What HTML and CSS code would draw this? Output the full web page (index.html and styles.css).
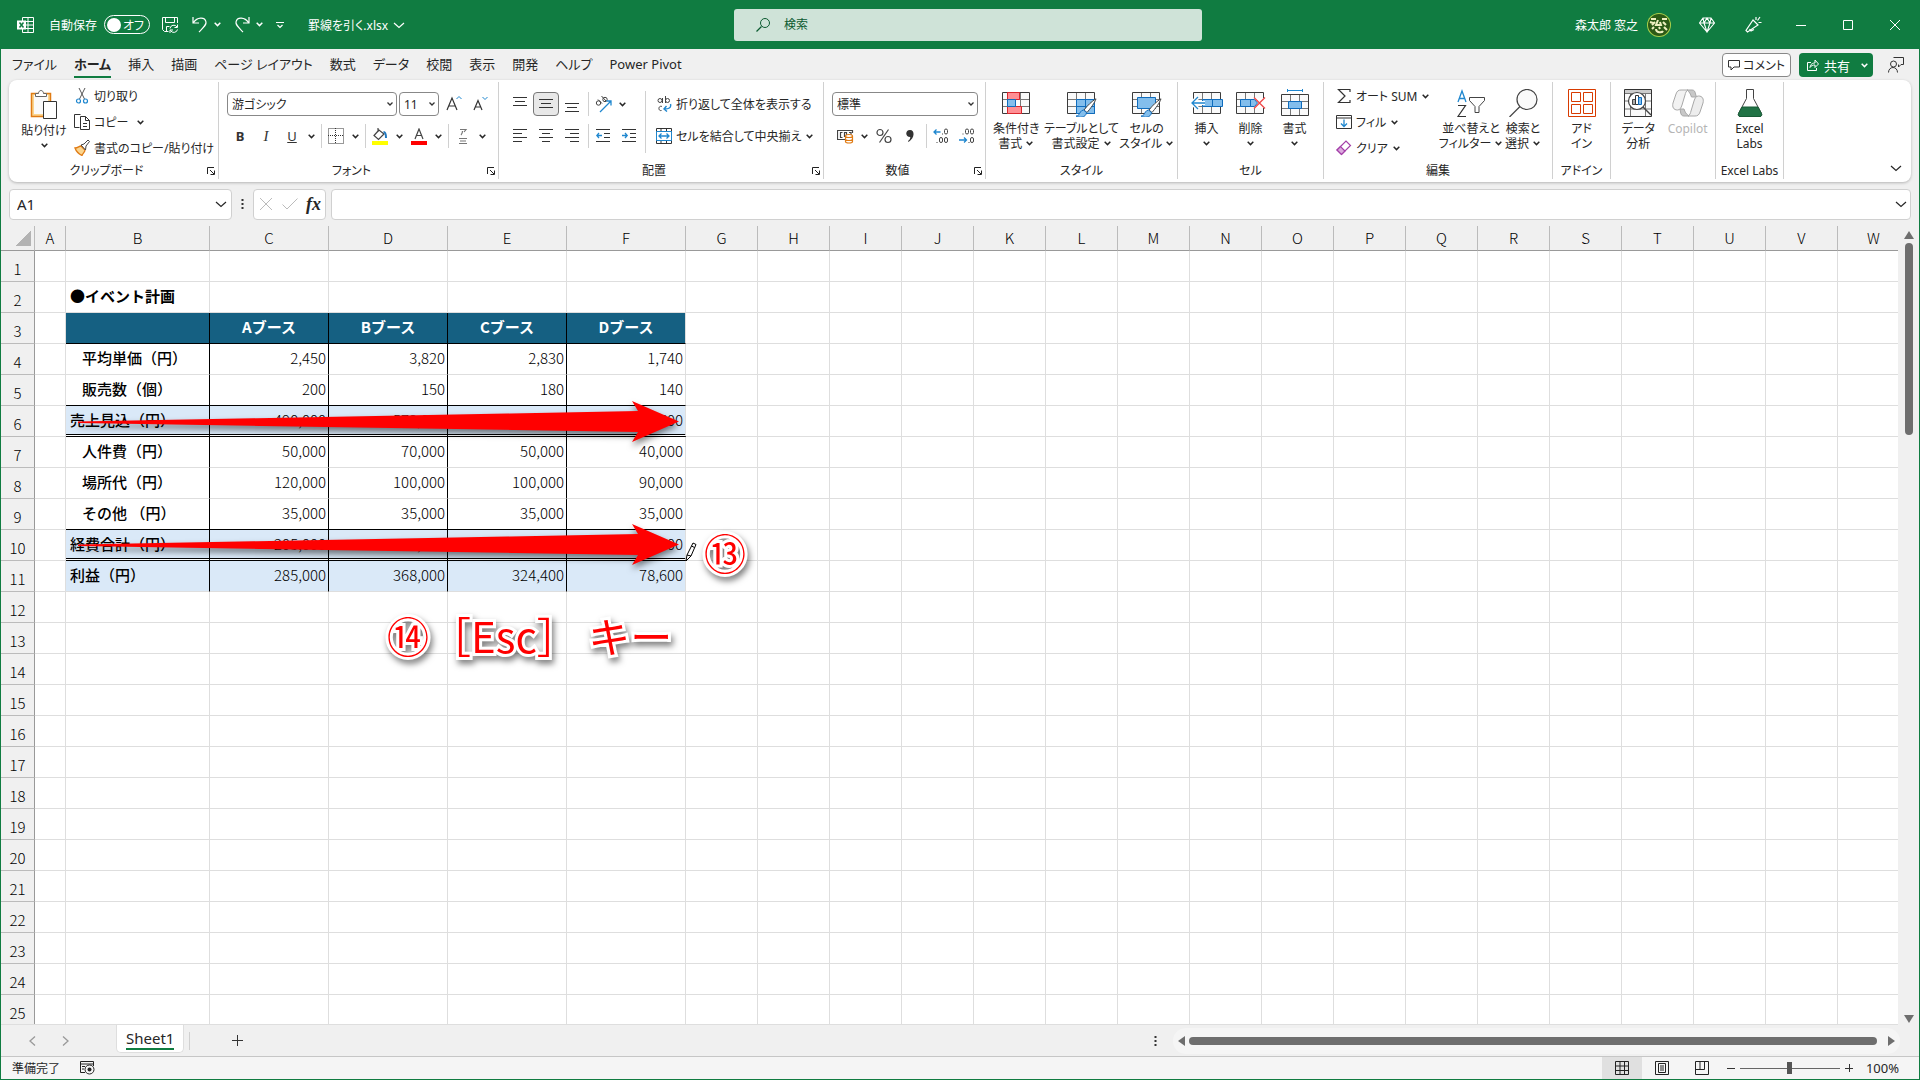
FILE: index.html
```html
<!DOCTYPE html>
<html lang="ja">
  <head>
    <meta charset="UTF-8" />
    <meta name="viewport" content="width=device-width, initial-scale=1.0" />
    <title>罫線を引く.xlsx</title>
    <link rel="stylesheet" href="styles.css">
  </head>
  <body>
    <!-- shared icon shapes -->
    <svg class="sprite" aria-hidden="true">
      <symbol id="chev" viewBox="0 0 8 8"><path d="M1.5 2.5 4 5l2.5-2.5" fill="none" stroke="currentColor" stroke-width="1.3" /></symbol>
      <symbol id="chev-lg" viewBox="0 0 12 12"><path d="M1 4 6 8.500 11 4" fill="none" stroke="currentColor" stroke-width="1.200" /></symbol>
      <symbol id="launch" viewBox="0 0 8 8"><path d="M.5 7V.5H7M3 3l4 4M7.500 3.500v4h-4" fill="none" stroke="#222" /></symbol>
      <symbol id="grid-icon" viewBox="0 0 28 22">
        <path d="M.5.5h27v21H.5z" fill="#fafafa" />
        <path d="M9.500 1v20M18.500 1v20M1 7.500h26M1 14.500h26" stroke="#777" fill="none" />
        <path d="M.5.5h27v21H.5z" stroke="#3b3b3b" fill="none" />
      </symbol>
      <symbol id="brush" viewBox="0 0 22 20">
        <path d="M21 .8C17 3 12 8 9 12l3 2.500C15 11 20 4.500 21 .8z" fill="#fff" stroke="#444" />
        <path d="M8.500 12c-3 .5-3.500 3-4.500 4.500-.8 1-2 1.500-3 1.500 3 2 10 2 10.500-3.500z" fill="#83beec" stroke="#0f6cbd" />
      </symbol>
    </svg>

    <div class="window">
      <header class="titlebar">
        <div class="title-left">
          <svg class="ico app-icon" width="17" height="16" viewBox="0 0 17 16"><path d="M5.500.5h11v15h-11zM11 .5v15M5.500 4.500h11M5.500 8h11M5.500 11.500h11" fill="none" stroke="#fff" /><path d="M0 3.500h9v9H0z" fill="#fff" /><path d="M2.500 5.500 6.500 10.500M6.500 5.500 2.500 10.500" stroke="#107c41" stroke-width="1.500" /></svg>
          <label class="autosave" for="autosave">自動保存</label>
          <span class="switch"><input type="checkbox" id="autosave"><span class="knob"></span><span>オフ</span></span>
          <button class="tb" aria-label="保存"><svg class="ico" width="16" height="16" viewBox="0 0 16 16"><path d="M15.500 6V.5H.5v12l2 2h4M3.500.5v5h9v-5M4.500 14V9.500h3M8 11.500A3.800 3.800 0 0 1 15 10M15.500 7.500v3h-3M15.500 12.500a3.800 3.800 0 0 1-7 1M8 16v-3h3" fill="none" stroke="#fff" /></svg></button>
          <button class="tb tb-undo" aria-label="元に戻す"><svg class="ico" width="16" height="17" viewBox="0 0 16 17"><path d="M1 1v6h6M1.500 6.500C5 1 13 .5 14 6c.5 3-2 5-7 10" fill="none" stroke="#fff" stroke-width="1.200" /></svg><svg class="ico" width="9" height="9"><use href="#chev" /></svg></button>
          <button class="tb" aria-label="やり直し"><svg class="ico" width="16" height="17" viewBox="0 0 16 17"><path d="M15 1v6H9M14.500 6.500C11 1 3 .5 2 6c-.5 3 2 5 7 10" fill="none" stroke="#fff" stroke-width="1.200" /></svg><svg class="ico" width="9" height="9"><use href="#chev" /></svg></button>
          <button class="tb" aria-label="カスタマイズ"><svg class="ico" width="8" height="8" viewBox="0 0 8 8"><path d="M0 1.500h8M1.500 4 4 6.500 6.500 4" fill="none" stroke="#fff" stroke-width="1.200" /></svg></button>
          <button class="tb file-name">罫線を引く.xlsx <svg class="ico" width="12" height="12"><use href="#chev-lg" /></svg></button>
        </div>
        <div class="search">
          <svg class="ico" width="16" height="16" viewBox="0 0 16 16"><circle cx="10" cy="6" r="4.500" fill="none" stroke="#0b5a30" /><path d="M6.500 9.500 1.500 14.500" stroke="#0b5a30" stroke-width="1.200" /></svg>
          <input type="search" aria-label="検索" placeholder="検索">
        </div>
        <div class="title-right">
          <span class="user">森太郎 窓之</span>
          <svg class="ico avatar" width="24" height="24" viewBox="0 0 24 24"><circle cx="12" cy="12" r="12" fill="#a9cf4a" /><circle cx="12" cy="12" r="11" fill="#2c5a16" /><path d="M4 6h5M15 6h5M8 9 5 12M16 9l3 3M11 7l-2 5h5l-1-3M5 16l2-2M17 14l3 3M9 16c0 4 6 4 7 2M12 14l1 2M3 9l3 1" fill="none" stroke="#eef0c0" stroke-width="2" /></svg>
          <button class="wb" aria-label="プレミアム"><svg class="ico" width="16" height="16" viewBox="0 0 16 16"><path d="M4 1h8l3.500 5L8 15 .5 6zM.5 6h15M4 1l1 5 3 9 3-9 1-5M5 6l3-5 3 5" fill="none" stroke="#fff" stroke-width="1.100" /></svg></button>
          <button class="wb" aria-label="新機能"><svg class="ico" width="17" height="17" viewBox="0 0 17 17"><path d="M8 4 1 14.500l1.500 1.500L13 9zM4.500 13l1.500 2 3-1.500M11 4V1M12.500 4.500 15 1M13.500 6.500h3" fill="none" stroke="#fff" stroke-width="1.200" /></svg></button>
          <button class="wb" aria-label="最小化"><svg class="ico" width="10" height="10"><path d="M0 5.500h10" stroke="#fff" /></svg></button>
          <button class="wb" aria-label="最大化"><svg class="ico" width="10" height="10"><path d="M.5.5h9v9h-9z" fill="none" stroke="#fff" /></svg></button>
          <button class="wb" aria-label="閉じる"><svg class="ico" width="10" height="10"><path d="M0 0l10 10M10 0 0 10" stroke="#fff" /></svg></button>
        </div>
      </header>

      <div class="tabs">
        <nav>
          <a href="#file">ファイル</a>
          <a href="#home" class="active">ホーム</a>
          <a href="#insert">挿入</a>
          <a href="#draw">描画</a>
          <a href="#layout">ページ レイアウト</a>
          <a href="#formulas">数式</a>
          <a href="#data">データ</a>
          <a href="#review">校閲</a>
          <a href="#view">表示</a>
          <a href="#dev">開発</a>
          <a href="#help">ヘルプ</a>
          <a href="#pivot">Power Pivot</a>
        </nav>
        <div class="tab-actions">
          <button class="comment"><svg class="ico" width="12" height="12" viewBox="0 0 12 12"><path d="M.5 1.500h11v6.500H6L3 11V8H.5z" fill="none" stroke="#333" /></svg>コメント</button>
          <button class="share"><svg class="ico" width="12" height="12" viewBox="0 0 12 12"><path d="M4 3.500H.5v8h9V9M3 8.500C3.500 5 5.500 4 8 4V1l3.500 4L8 8.500V6C6 6 4 6.500 3 8.500z" fill="none" stroke="#fff" /></svg>共有<svg class="ico" width="9" height="9"><use href="#chev" /></svg></button>
          <button class="plain" aria-label="共同作業"><svg class="ico" width="16" height="16" viewBox="0 0 16 16"><path d="M5.500.5h10v7h-2.500L10.500 10V7.500M.5 15.500c0-3 2-5 4.500-5s4.500 2 4.500 5" fill="none" stroke="#333" /><circle cx="5.500" cy="7" r="3" fill="#f0f0f0" stroke="#333" /></svg></button>
        </div>
      </div>

      <section class="ribbon">
        <div class="group g-clipboard">
          <div class="tools">
            <button class="big"><svg class="ico" width="28" height="30" viewBox="0 0 28 30"><path d="M1.500 4.500h19v23h-19z" fill="#fbd58f" stroke="#e07b14" stroke-width="1.500" /><path d="M4 6h14v19H4z" fill="#fafafa" /><path d="M5.500 7.500v-3h3c0-4 5-4 5 0h3v3z" fill="#fff" stroke="#666" /><path d="M13.500 12.500h13v17h-13z" fill="#fff" stroke="#333" /></svg><span>貼り付け</span><svg class="ico" width="9" height="9"><use href="#chev" /></svg></button>
            <div class="stack">
              <button class="row"><svg class="ico" width="16" height="16" viewBox="0 0 16 16"><path d="M5 0l5.500 11M11 0 5.500 11" stroke="#555" fill="none" /><circle cx="4.500" cy="13" r="2" fill="none" stroke="#1f87cf" stroke-width="1.200" /><circle cx="11.500" cy="13" r="2" fill="none" stroke="#1f87cf" stroke-width="1.200" /></svg>切り取り</button>
              <button class="row"><svg class="ico" width="16" height="16" viewBox="0 0 16 16"><path d="M5.500 13.500H.5V.5h6M6.500 2.500h5l4 4v9h-9zM11.500 2.500v4h4M9 9.500h4M9 12.500h4" fill="none" stroke="#333" /></svg>コピー<svg class="ico after" width="9" height="9"><use href="#chev" /></svg></button>
              <button class="row"><svg class="ico" width="16" height="16" viewBox="0 0 16 16"><path d="M1 8c3 0 4-2 6-2l4 4c0 2-2 3-3 5.500C5 14 2 11 1 8z" fill="#fbd58f" stroke="#e07b14" stroke-width="1.300" /><path d="M7 5l3-1 4-4 1.500 1.500L12 6l-.500 4z" fill="#fff" stroke="#444" /></svg>書式のコピー/貼り付け</button>
            </div>
          </div>
          <div class="caption has-launcher">クリップボード<button class="launcher" aria-label="詳細"><svg class="ico" width="8" height="8"><use href="#launch" /></svg></button></div>
        </div>

        <div class="group g-font">
          <div class="tools lines">
            <div class="line">
              <select class="combo combo-font" aria-label="フォント"><option>游ゴシック</option></select>
              <select class="combo combo-size" aria-label="サイズ"><option>11</option></select>
              <button class="ib" aria-label="拡大"><svg class="ico" width="16" height="18" viewBox="0 0 16 18"><path d="M1 15 6 3l5 12M3 11h6" fill="none" stroke="#333" stroke-width="1.200" /><path d="M10.500 4 13 1.500 15.500 4" fill="none" stroke="#1f87cf" /></svg></button>
              <button class="ib" aria-label="縮小"><svg class="ico" width="16" height="18" viewBox="0 0 16 18"><path d="M2 15 6 5.500 10 15M3.500 12h5" fill="none" stroke="#333" stroke-width="1.200" /><path d="M10.500 2 13 4.500 15.500 2" fill="none" stroke="#1f87cf" /></svg></button>
            </div>
            <div class="line">
              <button class="ib bold">B</button>
              <button class="ib italic">I</button>
              <button class="ib underline">U</button>
              <button class="dd" aria-label="下線の種類"><svg class="ico" width="9" height="9"><use href="#chev" /></svg></button>
              <span class="sep"></span>
              <button class="ib" aria-label="罫線"><svg class="ico" width="16" height="16" viewBox="0 0 16 16"><path d="M.5.5h15v15H.5zM7.500 0v16M0 7.500h16" fill="none" stroke="#333" stroke-dasharray="1 1" /></svg></button>
              <button class="dd" aria-label="罫線の種類"><svg class="ico" width="9" height="9"><use href="#chev" /></svg></button>
              <span class="sep"></span>
              <button class="ib" aria-label="塗りつぶし"><svg class="ico" width="16" height="17" viewBox="0 0 16 17"><path d="M7 2 2 7.500l4.500 4L12 6zM6 0v4" fill="none" stroke="#444" stroke-width="1.200" /><path d="M11.500 4c2 0 2.500 2 2.500 6" fill="none" stroke="#1f78c0" stroke-width="2" /><path d="M0 13h16v4H0z" fill="#ff0" /></svg></button>
              <button class="dd" aria-label="塗りつぶしの色"><svg class="ico" width="9" height="9"><use href="#chev" /></svg></button>
              <button class="ib" aria-label="文字色"><svg class="ico" width="16" height="17" viewBox="0 0 16 17"><path d="M4 11 8 1l4 10M5.500 7.500h5" fill="none" stroke="#444" stroke-width="1.200" /><path d="M0 13h16v4H0z" fill="#f00" /></svg></button>
              <button class="dd" aria-label="フォントの色"><svg class="ico" width="9" height="9"><use href="#chev" /></svg></button>
              <span class="sep"></span>
              <button class="ib" aria-label="ふりがな"><svg class="ico" width="10" height="17" viewBox="0 0 10 17"><path d="M2 1.500h6L6 4M4.500 3c0 2-.5 3-1.500 4M1 10.500h8M2 13h6M1 15.500h8" fill="none" stroke="#777" stroke-width="1.200" /></svg></button>
              <button class="dd" aria-label="ふりがなの設定"><svg class="ico" width="9" height="9"><use href="#chev" /></svg></button>
            </div>
          </div>
          <div class="caption has-launcher">フォント<button class="launcher" aria-label="詳細"><svg class="ico" width="8" height="8"><use href="#launch" /></svg></button></div>
        </div>

        <div class="group g-align">
          <div class="tools">
            <div class="lines">
              <div class="line">
                <button class="ib" aria-label="上揃え"><svg class="ico" width="14" height="18"><path d="M0 2.500h14M2 6.500h10M0 10.500h14" stroke="#333" /></svg></button>
                <button class="ib on" aria-label="上下中央揃え"><svg class="ico" width="14" height="14"><path d="M0 2.500h14M2 6.500h10M0 10.500h14" stroke="#333" /></svg></button>
                <button class="ib" aria-label="下揃え"><svg class="ico" width="14" height="18"><path d="M0 8.500h14M2 12.500h10M0 16.500h14" stroke="#333" /></svg></button>
                <span class="sep"></span>
                <button class="ib" aria-label="方向"><svg class="ico" width="17" height="17" viewBox="0 0 17 17"><circle cx="3.500" cy="7" r="2.200" fill="none" stroke="#444" /><path d="M3 3.500l4 4M6.500 0l4.500 5" stroke="#444" /><circle cx="10" cy="3.500" r="2.200" fill="none" stroke="#444" /><path d="M5 16 16 5M11.500 5H16v4.500" fill="none" stroke="#1f87cf" stroke-width="1.300" /></svg></button>
                <button class="dd" aria-label="方向の種類"><svg class="ico" width="9" height="9"><use href="#chev" /></svg></button>
              </div>
              <div class="line">
                <button class="ib" aria-label="左揃え"><svg class="ico" width="14" height="14"><path d="M0 .5h14M0 4.500h9M0 8.500h14M0 12.500h9" stroke="#333" /></svg></button>
                <button class="ib" aria-label="中央揃え"><svg class="ico" width="14" height="14"><path d="M0 .5h14M3 4.500h8M0 8.500h14M3 12.500h8" stroke="#333" /></svg></button>
                <button class="ib" aria-label="右揃え"><svg class="ico" width="14" height="14"><path d="M0 .5h14M5 4.500h9M0 8.500h14M5 12.500h9" stroke="#333" /></svg></button>
                <span class="sep"></span>
                <button class="ib" aria-label="インデントを減らす"><svg class="ico" width="14" height="14"><path d="M0 .5h14M8 4.500h6M8 8.500h6M0 12.500h14" stroke="#333" /><path d="M6 6.500H.8M3 4 .8 6.500 3 9" fill="none" stroke="#1f87cf" stroke-width="1.300" /></svg></button>
                <button class="ib" aria-label="インデントを増やす"><svg class="ico" width="14" height="14"><path d="M0 .5h14M8 4.500h6M8 8.500h6M0 12.500h14" stroke="#333" /><path d="M0 6.500h5.200M3 4l2.200 2.500L3 9" fill="none" stroke="#1f87cf" stroke-width="1.300" /></svg></button>
              </div>
            </div>
            <span class="sep tall"></span>
            <div class="lines wide">
              <button class="row"><svg class="ico" width="16" height="16" viewBox="0 0 16 16"><circle cx="4" cy="4.500" r="2" fill="none" stroke="#444" /><path d="M6.500 2v5M9.500 0v7M6 10.500c-4-1.500-4 5-.5 4" stroke="#444" fill="none" /><circle cx="11.500" cy="4.500" r="2" fill="none" stroke="#444" /><path d="M14.500 8c1 4-2 5-6 5M10.500 10l-2.500 3 3 2.500" fill="none" stroke="#1f87cf" stroke-width="1.400" /></svg>折り返して全体を表示する</button>
              <button class="row"><svg class="ico" width="16" height="16" viewBox="0 0 16 16"><path d="M.5.5h15v15H.5zM5 .5v3M10.500.5v3M5 12.500v3M10.500 12.500v3" fill="none" stroke="#333" /><path d="M.5 3.500h15v9H.5z" fill="#fff" stroke="#1f87cf" /><path d="M3 8h10M5.500 5.500 3 8l2.500 2.500M10.500 5.500 13 8l-2.500 2.500" fill="none" stroke="#1f87cf" stroke-width="1.300" /></svg>セルを結合して中央揃え<svg class="ico" width="9" height="9"><use href="#chev" /></svg></button>
            </div>
          </div>
          <div class="caption has-launcher">配置<button class="launcher" aria-label="詳細"><svg class="ico" width="8" height="8"><use href="#launch" /></svg></button></div>
        </div>

        <div class="group g-number">
          <div class="tools lines">
            <div class="line"><select class="combo combo-format" aria-label="表示形式"><option>標準</option></select></div>
            <div class="line">
              <button class="ib" aria-label="通貨"><svg class="ico" width="17" height="16" viewBox="0 0 17 16"><path d="M15.500 5V2.500H.5v9h8M5.500 4.500h-2v5h2M7.500 9V4.500h2V7M12 4.500h2V7" fill="none" stroke="#444" stroke-width="1.200" /><path d="M8.500 8v5.500c0 2 7 2 7 0V8c0-2-7-2-7 0c0 2 7 2 7 0M8.500 11c0 2 7 2 7 0" fill="#fff" stroke="#e07b14" stroke-width="1.200" /></svg></button>
              <button class="dd" aria-label="通貨の種類"><svg class="ico" width="9" height="9"><use href="#chev" /></svg></button>
              <button class="ib" aria-label="パーセント"><svg class="ico" width="16" height="16" viewBox="0 0 16 16"><circle cx="4" cy="4.500" r="3" fill="none" stroke="#444" stroke-width="1.200" /><circle cx="12" cy="11.500" r="3" fill="none" stroke="#444" stroke-width="1.200" /><path d="M12.500 1.500 3.500 14.500" stroke="#444" stroke-width="1.200" /></svg></button>
              <button class="ib" aria-label="桁区切り"><svg class="ico" width="10" height="14" viewBox="0 0 10 14"><path d="M5 1c5 0 5 8-1.500 12L3 12c2-1.500 2.500-3 2.200-4C0 8 0 1 5 1z" fill="#333" /></svg></button>
              <span class="sep"></span>
              <button class="ib" aria-label="小数点以下を増やす"><svg class="ico" width="16" height="16" viewBox="0 0 16 16"><rect x="11.500" y="1" width="3" height="5" rx="1.500" fill="none" stroke="#444" /><rect x="6.500" y="9.500" width="3" height="5" rx="1.500" fill="none" stroke="#444" /><rect x="11.500" y="9.500" width="3" height="5" rx="1.500" fill="none" stroke="#444" /><path d="M9 6h1M3.500 14.500h1" stroke="#444" /><path d="M7.500 4H1M3.500 1.500 1 4l2.500 2.500" fill="none" stroke="#1f87cf" stroke-width="1.300" /></svg></button>
              <button class="ib" aria-label="小数点以下を減らす"><svg class="ico" width="16" height="16" viewBox="0 0 16 16"><rect x="6.500" y="1" width="3" height="5" rx="1.500" fill="none" stroke="#444" /><rect x="11.500" y="1" width="3" height="5" rx="1.500" fill="none" stroke="#444" /><rect x="11.500" y="9.500" width="3" height="5" rx="1.500" fill="none" stroke="#444" /><path d="M3.500 6h1M9.500 14.500h1" stroke="#444" /><path d="M0 12h7.500M5 9.500 7.500 12 5 14.500" fill="none" stroke="#1f87cf" stroke-width="1.300" /></svg></button>
            </div>
          </div>
          <div class="caption has-launcher">数値<button class="launcher" aria-label="詳細"><svg class="ico" width="8" height="8"><use href="#launch" /></svg></button></div>
        </div>

        <div class="group g-style">
          <div class="tools">
            <button class="big w54"><svg class="ico" width="28" height="28" viewBox="0 0 28 28"><use href="#grid-icon" y="3" width="28" height="22" /><path d="M5.500 3.500h12v7h-12zM5.500 17.500h14v7h-14z" fill="#ff8f94" stroke="#d9262c" /><path d="M5.500 10.500h8v7h-8z" fill="#83beec" stroke="#0f6cbd" /></svg><span>条件付き</span><span>書式 <svg class="ico" width="9" height="9"><use href="#chev" /></svg></span></button>
            <button class="big w70"><svg class="ico" width="30" height="28" viewBox="0 0 30 28"><use href="#grid-icon" y="3" width="28" height="22" /><path d="M9.500 10.500h18v14h-18z" fill="#83beec" stroke="#0f6cbd" /><path d="M18.500 10.500v14M9.500 17.500h18" stroke="#0f6cbd" /><use href="#brush" x="8" y="9" width="22" height="20" /></svg><span>テーブルとして</span><span>書式設定 <svg class="ico" width="9" height="9"><use href="#chev" /></svg></span></button>
            <button class="big w54"><svg class="ico" width="30" height="28" viewBox="0 0 30 28"><use href="#grid-icon" y="3" width="28" height="22" /><path d="M5.500 8.500h18v11h-18z" fill="#83beec" stroke="#0f6cbd" /><use href="#brush" x="8" y="9" width="22" height="20" /></svg><span>セルの</span><span>スタイル <svg class="ico" width="9" height="9"><use href="#chev" /></svg></span></button>
          </div>
          <div class="caption">スタイル</div>
        </div>

        <div class="group g-cell">
          <div class="tools">
            <button class="big w44"><svg class="ico" width="32" height="28" viewBox="0 0 32 28"><use href="#grid-icon" x="2" y="3" width="28" height="22" /><path d="M11.500 10.500h20v7h-20zM21.500 10.500v7" fill="#83beec" stroke="#0f6cbd" /><path d="M14 14H1M7 8l-6 6 6 6" fill="none" stroke="#fff" stroke-width="4" /><path d="M14 14H1M7 8l-6 6 6 6" fill="none" stroke="#1f87cf" stroke-width="1.300" /></svg><span>挿入</span><svg class="ico" width="9" height="9"><use href="#chev" /></svg></button>
            <button class="big w44"><svg class="ico" width="30" height="28" viewBox="0 0 30 28"><use href="#grid-icon" x="0" y="3" width="28" height="22" /><path d="M18 9h12v10H18z" fill="#fff" /><path d="M4.500 10.500h10v7h-10zM14.500 10.500h4l3 3.500-3 3.500h-4" fill="#83beec" stroke="#0f6cbd" /><path d="M18 8.500 29 19.500M29 8.500 18 19.500" stroke="#f04a4a" stroke-width="1.400" /></svg><span>削除</span><svg class="ico" width="9" height="9"><use href="#chev" /></svg></button>
            <button class="big w44"><svg class="ico" width="28" height="28" viewBox="0 0 28 28"><use href="#grid-icon" y="5" width="28" height="22" /><path d="M7.500 12.500h13v7h-13z" fill="#83beec" stroke="#0f6cbd" /><path d="M6.500 0v3M21.500 0v3M6.500 1.500h15" stroke="#1f87cf" fill="none" /></svg><span>書式</span><svg class="ico" width="9" height="9"><use href="#chev" /></svg></button>
          </div>
          <div class="caption">セル</div>
        </div>

        <div class="group g-edit">
          <div class="tools">
            <div class="stack">
              <button class="row"><svg class="ico" width="16" height="16" viewBox="0 0 16 16"><path d="M14 4V1.500H2.500L9 8l-6.500 6.500H14V12" fill="none" stroke="#333" stroke-width="1.200" /></svg>オート SUM<svg class="ico" width="9" height="9"><use href="#chev" /></svg></button>
              <button class="row"><svg class="ico" width="16" height="14" viewBox="0 0 16 14"><path d="M.5.5h15v13H.5zM.5 3h15" fill="none" stroke="#333" /><path d="M8 4.500v7M5 8.500l3 3 3-3" fill="none" stroke="#1f87cf" stroke-width="1.300" /></svg>フィル<svg class="ico" width="9" height="9"><use href="#chev" /></svg></button>
              <button class="row"><svg class="ico" width="16" height="16" viewBox="0 0 16 16"><path d="M1 10 10 1l4.500 4.500-9 9z" fill="#fff" stroke="#a33fa8" stroke-width="1.200" /><path d="M1 10l3.500-3.500L9 11l-3.500 3.500z" fill="#dcaade" stroke="#a33fa8" stroke-width="1.200" /></svg>クリア<svg class="ico" width="9" height="9"><use href="#chev" /></svg></button>
            </div>
            <button class="big w54"><svg class="ico" width="30" height="28" viewBox="0 0 30 28"><path d="M2 13 6 2l4 11M3.500 9.500h5" fill="none" stroke="#1f87cf" stroke-width="1.300" /><path d="M2 16.500h7.500L2 27.500h8" fill="none" stroke="#333" stroke-width="1.200" /><path d="M13.500 8.500h15v3l-5.500 6v6h-4v-6l-5.500-6z" fill="#fff" stroke="#444" /></svg><span>並べ替えと</span><span>フィルター <svg class="ico" width="9" height="9"><use href="#chev" /></svg></span></button>
            <button class="big"><svg class="ico" width="30" height="28" viewBox="0 0 30 28"><circle cx="19" cy="10.500" r="10" fill="#fafafa" stroke="#444" stroke-width="1.200" /><path d="M12 17.500 1.500 28" stroke="#444" stroke-width="1.200" /></svg><span>検索と</span><span>選択 <svg class="ico" width="9" height="9"><use href="#chev" /></svg></span></button>
          </div>
          <div class="caption">編集</div>
        </div>

        <div class="group g-addin">
          <div class="tools">
            <button class="big"><svg class="ico" width="28" height="28" viewBox="0 0 28 28"><path d="M.5.5h27v27H.5zM3.500 3.500h9v9h-9zM15.500 3.500h9v9h-9zM3.500 15.500h9v9h-9zM15.500 15.500h9v9h-9z" fill="#fff" stroke="#d83b01" /></svg><span>アド</span><span>イン</span></button>
          </div>
          <div class="caption">アドイン</div>
        </div>

        <div class="group g-data">
          <div class="tools">
            <button class="big w44"><svg class="ico" width="28" height="28" viewBox="0 0 28 28"><path d="M.5.5h27v27H.5z" fill="#fafafa" /><path d="M1 1h26v3H1z" fill="#ccc" /><path d="M1 4.500h26M1 12h26M1 20h26M6.500 5v22M21.500 5v22" stroke="#777" /><path d="M.5.5h27v27H.5z" fill="none" stroke="#333" /><circle cx="13" cy="12" r="8.500" fill="#fff" stroke="#444" stroke-width="1.200" /><path d="M19 18l8 8" stroke="#444" stroke-width="1.500" /><path d="M8.500 10.500h3v5h-3z" fill="#aaa" stroke="#444" /><path d="M11.500 6.500h3v9h-3z" fill="#fff" stroke="#333" /><path d="M14.500 8.500h3v7h-3z" fill="#83beec" stroke="#0f6cbd" /></svg><span>データ</span><span>分析</span></button>
            <button class="big w44" disabled><svg class="ico" width="32" height="28" viewBox="0 0 32 28"><path d="M15 1h5c2 0 3 1 3.500 4l1 3h-5c-1-3-2-5-4.500-7zM17 27h-5c-2 0-3-1-3.500-4L8 20h4c1 3 2 5 5 7z" fill="#c8c8c8" stroke="#a8a8a8" /><path d="M9 1h7c-2 1-2.500 3-3 5l-3 10c-1 3-2 5-4.500 5C1.500 21 0 18 1 14L4 5C5 2 6.500 1 9 1z" fill="#f2f2f2" stroke="#a8a8a8" /><path d="M23 27h-7c2-1 2.500-3 3-5l3-10c1-3 2-5 4.500-5C30.500 7 32 10 31 14l-3 9c-1 3-2.500 4-5 4z" fill="#ededed" stroke="#a8a8a8" /></svg><span>Copilot</span></button>
          </div>
          <div class="caption"></div>
        </div>

        <div class="group g-labs">
          <div class="tools">
            <button class="big"><svg class="ico" width="26" height="28" viewBox="0 0 26 28"><path d="M9.500.5h7v9l8 15c.5 1.500 0 3-1.500 3H3c-1.500 0-2-1.500-1.500-3l8-15z" fill="#fff" stroke="#444" /><path d="M5 18h16l3.500 6.500c.5 1.500 0 3-1.500 3H3c-1.500 0-2-1.500-1.500-3z" fill="#217346" stroke="#185c37" /></svg><span>Excel</span><span>Labs</span></button>
          </div>
          <div class="caption">Excel Labs</div>
        </div>
        <button class="collapse" aria-label="リボンを折りたたむ"><svg class="ico" width="12" height="12"><use href="#chev-lg" /></svg></button>
      </section>

      <div class="formula-bar">
        <div class="name-box"><input type="text" value="A1" aria-label="名前ボックス"><svg class="ico" width="12" height="12"><use href="#chev-lg" /></svg></div>
        <svg class="ico dots" width="3" height="12"><path d="M1.500 1v2M1.500 5v2M1.500 9v2" stroke="#333" stroke-width="2" /></svg>
        <div class="fx-box">
          <button class="plain" aria-label="キャンセル"><svg class="ico" width="14" height="14"><path d="M1 1l12 12M13 1 1 13" stroke="#bbb" /></svg></button>
          <button class="plain" aria-label="入力"><svg class="ico" width="16" height="14"><path d="M.5 7.500 5 12 15.500 1.500" fill="none" stroke="#bbb" /></svg></button>
          <button class="plain fx">fx</button>
        </div>
        <div class="formula"><input type="text" aria-label="数式バー"><svg class="ico" width="12" height="12"><use href="#chev-lg" /></svg></div>
      </div>

      <main class="workspace">
        <div class="sheet">
          <table id="grid"></table>
          <svg class="arrows" width="640" height="200" viewBox="0 0 640 200">
            <path d="M0 29.500 560 19 554 9l47 20.500L554 50l6-10L0 31z" />
            <path d="M0 152.500 560 142 554 132l47 20.500L554 173l6-10L0 154z" />
          </svg>
          <svg class="pen" width="12" height="20" viewBox="0 0 12 20"><path d="M1 19l1-6 6-12 3 1.500L6 14zM2 13l4 1M6.500 4l3 1.500" fill="#fff" stroke="#000" /></svg>
          <div class="note note-13">⑬</div>
          <div class="note note-14">⑭［Esc］ キー</div>
        </div>
        <div class="vscroll">
          <svg class="ico" width="10" height="8"><path d="M5 0l5 8H0z" fill="#6e6e6e" /></svg>
          <div class="vtrack"><div class="vthumb"></div></div>
          <svg class="ico" width="10" height="8"><path d="M0 0h10L5 8z" fill="#6e6e6e" /></svg>
        </div>
      </main>

      <div class="sheet-bar">
        <div class="sheet-left">
          <button class="plain" aria-label="前のシート"><svg class="ico" width="7" height="10"><path d="M6 .5 1 5l5 4.500" fill="none" stroke="#999" stroke-width="1.300" /></svg></button>
          <button class="plain" aria-label="次のシート"><svg class="ico" width="7" height="10"><path d="M1 .5 6 5 1 9.500" fill="none" stroke="#999" stroke-width="1.300" /></svg></button>
          <a href="#sheet1" class="sheet-tab">Sheet1</a>
          <span class="sep"></span>
          <button class="plain add" aria-label="新しいシート"><svg class="ico" width="11" height="11"><path d="M5.500 0v11M0 5.500h11" stroke="#333" /></svg></button>
        </div>
        <div class="hscroll-area">
          <svg class="ico" width="3" height="12"><path d="M1.500 1v2M1.500 5v2M1.500 9v2" stroke="#333" stroke-width="2" /></svg>
          <div class="hscroll">
            <svg class="ico" width="7" height="10"><path d="M7 0v10L0 5z" fill="#6e6e6e" /></svg>
            <div class="hthumb"></div>
            <svg class="ico" width="7" height="10"><path d="M0 0v10l7-5z" fill="#6e6e6e" /></svg>
          </div>
        </div>
      </div>

      <footer class="status">
        <span>準備完了</span>
        <button class="plain macro" aria-label="マクロの記録"><svg class="ico" width="15" height="14" viewBox="0 0 15 14"><path d="M5 11.500H.5v-11h13V5M.5 3h13M2 5.500h3M2 8h2" fill="none" stroke="#222" /><circle cx="9.500" cy="8.500" r="4.500" fill="#f5f5f5" stroke="#222" /><circle cx="9.500" cy="8.500" r="2" fill="#222" /></svg></button>
        <div class="views">
          <button class="view on" aria-label="標準"><svg class="ico" width="14" height="14"><path d="M.5.5h13v13H.5zM5 0v14M9.500 0v14M0 5h14M0 9.500h14" fill="none" stroke="#222" /></svg></button>
          <button class="view" aria-label="ページ レイアウト"><svg class="ico" width="14" height="14"><path d="M.5.5h13v13H.5zM3.500 2.500h7v9h-7zM5 5h4M5 7h4M5 9h4" fill="none" stroke="#222" /></svg></button>
          <button class="view" aria-label="改ページ プレビュー"><svg class="ico" width="14" height="14"><path d="M.5.5h13v13H.5zM1 8.500h8.500V1M5 1v7.500" fill="none" stroke="#222" /></svg></button>
          <button class="plain zoom-btn" aria-label="縮小"><svg class="ico" width="8" height="8"><path d="M0 4.500h8" stroke="#333" /></svg></button>
          <input type="range" class="zoom" min="10" max="190" value="100" aria-label="ズーム">
          <button class="plain zoom-btn" aria-label="拡大"><svg class="ico" width="8" height="8"><path d="M0 4.500h8M4.500 0v8" stroke="#333" /></svg></button>
          <span class="percent">100%</span>
        </div>
      </footer>
    </div>

    <script>
      // only as many rows and columns as the window can show
      const ROWS = Math.max(11, Math.ceil((window.innerHeight - 306) / 31));
      const COLS = Math.max(6, Math.ceil((window.innerWidth - 706) / 72) + 6);
      const data = {
        2: ["●イベント計画"],
        3: ["", "Aブース", "Bブース", "Cブース", "Dブース"],
        4: ["平均単価（円）", "2,450", "3,820", "2,830", "1,740"],
        5: ["販売数（個）", "200", "150", "180", "140"],
        6: ["売上見込（円）", "490,000", "573,000", "509,400", "243,600"],
        7: ["人件費（円）", "50,000", "70,000", "50,000", "40,000"],
        8: ["場所代（円）", "120,000", "100,000", "100,000", "90,000"],
        9: ["その他 （円）", "35,000", "35,000", "35,000", "35,000"],
        10: ["経費合計（円）", "205,000", "205,000", "185,000", "165,000"],
        11: ["利益（円）", "285,000", "368,000", "324,400", "78,600"],
      };
      const rowClass = {
        2: "title",
        3: "head",
        4: "item",
        5: "item last",
        6: "total double",
        7: "item",
        8: "item",
        9: "item last",
        10: "total double",
        11: "total",
      };

      function colName(i) {
        const last = String.fromCharCode(65 + (i % 26));
        return i < 26 ? last : colName(Math.floor(i / 26) - 1) + last;
      }

      let html = '<colgroup><col class="c-num"><col class="c-a"><col class="c-b">';
      html += '<col class="c-data">'.repeat(4) + '<col class="c-std">'.repeat(COLS - 6);
      html += '</colgroup><thead><tr><th class="corner"></th>';
      for (let c = 0; c < COLS; c++) {
        html += `<th scope="col">${colName(c)}</th>`;
      }
      html += "</tr></thead><tbody>";
      for (let r = 1; r <= ROWS; r++) {
        html += `<tr class="${rowClass[r] || ""}"><th scope="row">${r}</th>`;
        for (let c = 0; c < COLS; c++) {
          const inTable = r > 2 && r < 12 && c > 0 && c < 6;
          const text = (data[r] && data[r][c - 1]) || "";
          const cls = inTable ? (c === 1 ? "cell label" : "cell") : "";
          html += `<td class="${cls}">${text}</td>`;
        }
        html += "</tr>";
      }
      document.getElementById("grid").innerHTML = html + "</tbody>";
    </script>
  </body>
</html>
```
FILE: styles.css
```css
* {
  box-sizing: border-box;
}

:root {
  --green: #107c41;
  --bg: #f0f0f0;
  --line: #d0d0d0;
  --grid: #dedede;
  --text: #262626;
}

body {
  margin: 0;
  font-family: "Noto Sans", "Noto Sans CJK JP", sans-serif;
  font-size: 12px;
  font-feature-settings: "palt";
  color: var(--text);
}

button,
input,
select {
  margin: 0;
  padding: 0;
  border: none;
  background: none;
  color: inherit;
  font: inherit;
  font-feature-settings: inherit;
}

a {
  color: inherit;
  text-decoration: none;
}

.sprite {
  position: absolute;
  width: 0;
  height: 0;
}

.ico {
  flex: none;
  display: block;
}

.window {
  display: flex;
  flex-direction: column;
  height: 100vh;
  overflow: hidden;
  background: var(--bg);
  border: 1px solid var(--green);
  border-top: none;
}

/* title bar */
.titlebar {
  display: grid;
  grid-template-columns: 1fr 468px 1fr;
  align-items: center;
  height: 49px;
  flex: none;
  padding-left: 16px;
  background: var(--green);
  color: #fff;
}

.title-left,
.title-right {
  display: flex;
  align-items: center;
}

.title-right {
  justify-content: flex-end;
  padding-right: 1px;
}

.autosave {
  margin: 0 7px 0 15px;
}

.switch {
  position: relative;
  display: flex;
  align-items: center;
  justify-content: flex-end;
  width: 46px;
  height: 19px;
  padding-right: 5px;
  border: 1px solid #fff;
  border-radius: 10px;
}

.switch input {
  position: absolute;
  inset: 0;
  opacity: 0;
}

.knob {
  width: 14px;
  height: 14px;
  margin-right: auto;
  margin-left: 2px;
  border-radius: 50%;
  background: #fff;
}

.tb {
  display: flex;
  align-items: center;
  gap: 5px;
  margin-left: 12px;
}

.tb-undo {
  margin-left: 14px;
}

.title-left .file-name {
  margin-left: 24px;
}

.search {
  display: flex;
  align-items: center;
  gap: 13px;
  height: 32px;
  padding-left: 21px;
  border-radius: 3px;
  background: #cfe3d8;
  color: #0b5a30;
}

.search input {
  flex: 1;
  outline: none;
}

.search input::placeholder {
  color: #0b5a30;
}

.avatar {
  margin: 0 12px 0 9px;
}

.wb {
  display: flex;
  align-items: center;
  justify-content: center;
  width: 47px;
  height: 40px;
}

/* ribbon tabs */
.tabs {
  display: flex;
  justify-content: space-between;
  align-items: center;
  height: 31px;
  flex: none;
  padding: 1px 15px 0 11px;
}

.tabs nav {
  display: flex;
  gap: 17px;
  font-size: 13px;
  line-height: 24px;
}

.tabs .active {
  font-weight: bold;
  border-bottom: 2px solid var(--green);
}

.tab-actions {
  display: flex;
  align-items: center;
  gap: 8px;
}

.tab-actions button {
  display: flex;
  align-items: center;
}

.tab-actions .comment {
  gap: 3px;
  height: 24px;
  padding: 0 5px;
  border: 1px solid #888;
  border-radius: 4px;
  background: #fff;
}

.tab-actions .share {
  gap: 5px;
  height: 24px;
  padding: 0 4px 0 8px;
  border-radius: 4px;
  background: var(--green);
  color: #fff;
  font-size: 13px;
}

.share .ico:last-child {
  margin-left: 5px;
}

.tab-actions .plain {
  margin-left: 7px;
}

/* ribbon */
.ribbon {
  position: relative;
  display: flex;
  flex: none;
  height: 102px;
  margin: 0 8px;
  padding: 2px 0 3px;
  border-radius: 8px;
  background: #fff;
  box-shadow: 0 1px 3px rgba(0, 0, 0, 0.25);
}

.group {
  display: flex;
  flex-direction: column;
  flex: none;
  border-right: 1px solid var(--line);
}

.g-clipboard { width: 210px; }
.g-font { width: 280px; }
.g-align { width: 325px; }
.g-number { width: 162px; }
.g-style { width: 192px; }
.g-cell { width: 146px; }
.g-edit { width: 229px; }
.g-addin { width: 58px; }
.g-data { width: 105px; }
.g-labs { width: 68px; }

.tools {
  display: flex;
  flex: 1;
  justify-content: center;
}

.g-clipboard .tools,
.g-align .tools,
.g-edit .tools {
  justify-content: flex-start;
  padding-left: 8px;
}

.g-clipboard .tools {
  padding-left: 10px;
}

.g-edit .tools {
  padding-left: 12px;
}

.caption {
  position: relative;
  height: 18px;
  line-height: 19px;
  text-align: center;
  white-space: nowrap;
}

.has-launcher {
  padding-right: 14px;
}

.launcher {
  position: absolute;
  right: 3px;
  bottom: 4px;
}

.big {
  display: flex;
  flex-direction: column;
  align-items: center;
  width: 50px;
  padding-top: 7px;
  line-height: 15px;
  white-space: nowrap;
}

.big > .ico:first-child {
  margin-bottom: 4px;
}

.big > .ico:last-child {
  margin-top: 3px;
}

.big span {
  display: flex;
  align-items: center;
  gap: 3px;
}

.big[disabled] {
  color: #b5b5b5;
}

.w44 { width: 44px; }
.w54 { width: 54px; }
.w70 { width: 70px; }

.g-style .tools,
.g-data .tools {
  justify-content: space-evenly;
}

.stack {
  display: flex;
  flex-direction: column;
  padding-top: 1px;
}

.row {
  display: flex;
  align-items: center;
  gap: 4px;
  height: 26px;
  white-space: nowrap;
}

.row .after {
  margin-left: 4px;
}

.g-clipboard .stack {
  margin-left: 5px;
}

.g-edit .stack {
  width: 108px;
}

.lines {
  display: flex;
  flex-direction: column;
  justify-content: flex-start;
  gap: 6px;
  padding-top: 9px;
}

.tools.lines {
  padding-left: 8px;
}

.line {
  display: flex;
  align-items: center;
  height: 26px;
}

.combo {
  height: 24px;
  padding: 0 4px;
  border: 1px solid #888;
  border-radius: 4px;
  appearance: none;
  background: #fff url("data:image/svg+xml,%3Csvg xmlns='http://www.w3.org/2000/svg' width='8' height='8'%3E%3Cpath d='M1.500 2.500 4 5l2.500-2.500' fill='none' stroke='%23333' stroke-width='1.300'/%3E%3C/svg%3E") no-repeat right 2px center;
}

.combo-font {
  width: 170px;
  margin-right: 2px;
}

.combo-size {
  width: 40px;
  margin-right: 2px;
}

.combo-format {
  width: 146px;
}

.ib {
  display: flex;
  align-items: center;
  justify-content: center;
  width: 26px;
  height: 24px;
  font-size: 13px;
  color: #333;
}

.on {
  border: 1px solid #777;
  border-radius: 4px;
  background: #e8e8e8;
}

.bold {
  font-weight: bold;
}

.italic {
  font-family: "Liberation Serif", serif;
  font-style: italic;
  font-size: 15px;
}

.underline {
  text-decoration: underline;
}

.dd {
  display: flex;
  justify-content: center;
  width: 13px;
}

.sep {
  width: 1px;
  height: 24px;
  margin: 0 1px 0 3px;
  background: var(--line);
}

.sep.tall {
  height: 62px;
  margin: 9px 10px 0 3px;
}

.collapse {
  position: absolute;
  right: 9px;
  bottom: 8px;
}

/* formula bar */
.formula-bar {
  display: flex;
  align-items: center;
  flex: none;
  gap: 5px;
  height: 44px;
  padding: 0 8px;
}

.name-box,
.fx-box,
.formula {
  display: flex;
  align-items: center;
  height: 31px;
  border: 1px solid var(--line);
  border-radius: 4px;
  background: #fff;
}

.name-box {
  width: 223px;
  padding: 0 4px 0 7px;
}

.name-box input,
.formula input {
  flex: 1;
  min-width: 0;
  outline: none;
  font-size: 15px;
}

.dots {
  margin: 0 4px;
}

.fx-box {
  width: 73px;
  justify-content: space-between;
  padding: 0 4px 0 5px;
}

.fx {
  font-family: "Liberation Serif", serif;
  font-style: italic;
  font-weight: bold;
  font-size: 18px;
  line-height: 20px;
}

.formula {
  flex: 1;
  padding: 0 3px;
}

/* grid */
.workspace {
  display: flex;
  flex: 1;
  min-height: 0;
}

.sheet {
  position: relative;
  flex: 1;
  min-width: 0;
  overflow: hidden;
  background: #fff;
  border-bottom: 1px solid var(--grid);
  font-family: "Noto Sans CJK JP", sans-serif;
  font-feature-settings: normal;
}

#grid {
  table-layout: fixed;
  width: 0;
  border-spacing: 0;
  font-size: 15px;
  font-weight: 300;
  line-height: 20px;
  color: #000;
}

.c-num { width: 34px; }
.c-a { width: 31px; }
.c-b { width: 144px; }
.c-data { width: 119px; }
.c-std { width: 72px; }

#grid th,
#grid td {
  height: 31px;
  padding: 0 2px 2px;
  border-right: 1px solid var(--grid);
  border-bottom: 1px solid var(--grid);
  text-align: right;
  white-space: nowrap;
}

#grid th {
  background: var(--bg);
  border-right-color: #bbb;
  font-weight: 300;
  text-align: center;
}

#grid thead th {
  height: 25px;
  padding-bottom: 0;
  border-bottom-color: #999;
}

#grid tbody th {
  padding: 5px 2px 0;
  border-right-color: #999;
  border-bottom-color: #bbb;
}

#grid .corner {
  background: linear-gradient(135deg, transparent 50%, #b3b3b3 50%) no-repeat 15px 5px / 15px 15px var(--bg);
}

#grid .title td:nth-child(3) {
  padding-left: 4px;
  font-weight: bold;
  text-align: left;
}

#grid .cell {
  border-right-color: #000;
}

#grid .cell:nth-child(7) {
  border-right-color: var(--grid);
}

#grid .label {
  padding-left: 4px;
  font-weight: 500;
  text-align: left;
}

#grid .item .label {
  padding-left: 16px;
}

#grid .head .cell {
  background: #156082;
  border-bottom-color: #000;
  color: #fff;
  font-weight: bold;
  text-align: center;
}

#grid .last .cell {
  border-bottom-color: #000;
}

#grid .total .cell {
  background: #dae9f8;
}

#grid .double .cell {
  padding-bottom: 0;
  background-clip: padding-box;
  border-bottom: 3px double #000;
}

.arrows {
  position: absolute;
  left: 77px;
  top: 166px;
  fill: #f00;
  filter: drop-shadow(0 4px 3px rgba(0, 0, 0, 0.5));
}

.pen {
  position: absolute;
  left: 684px;
  top: 316px;
}

.note {
  position: absolute;
  color: #f00;
  font-size: 42px;
  line-height: 60px;
  font-weight: 400;
  white-space: pre;
  -webkit-text-stroke: 6px #fff;
  paint-order: stroke fill;
  filter: drop-shadow(2px 4px 3px rgba(0, 0, 0, 0.5));
}

.note-13 {
  left: 703px;
  top: 296px;
}

.note-14 {
  left: 386px;
  top: 379px;
}

.vscroll {
  display: flex;
  flex-direction: column;
  align-items: center;
  width: 21px;
  padding: 5px 0 2px;
}

.vtrack {
  flex: 1;
  padding: 4px 0;
}

.vthumb {
  width: 8px;
  height: 25%;
  border-radius: 4px;
  background: #6e6e6e;
}

/* sheet tabs */
.sheet-bar {
  display: flex;
  justify-content: space-between;
  flex: none;
  height: 32px;
  border-bottom: 1px solid #c6c6c6;
}

.sheet-left,
.hscroll-area,
.hscroll {
  display: flex;
  align-items: center;
}

.sheet-left {
  gap: 26px;
  padding-left: 28px;
}

.sheet-tab {
  align-self: flex-start;
  margin: -1px 0 0 21px;
  padding: 0 9px;
  height: 29px;
  border: 1px solid var(--grid);
  border-top: none;
  border-radius: 0 0 5px 5px;
  background: #fff;
  font-size: 15px;
  line-height: 28px;
}

.sheet-tab::after {
  content: "";
  display: block;
  height: 2px;
  margin-top: -4px;
  background: var(--green);
}

.sheet-left .sep {
  height: 18px;
  margin: 0 16px 0 -21px;
}

.hscroll-area {
  gap: 16px;
  width: 40%;
  padding: 0 19px 0 2px;
}

.hscroll {
  flex: 1;
  gap: 4px;
  height: 26px;
  padding: 0 5px;
  border-radius: 13px;
  background: #f5f5f5;
}

.hthumb {
  flex: 1;
  height: 8px;
  margin-right: 7px;
  border-radius: 4px;
  background: #6e6e6e;
}

/* status bar */
.status {
  display: flex;
  align-items: center;
  flex: none;
  height: 22px;
  padding-left: 11px;
  background: #f5f5f5;
}

.macro {
  margin-left: 20px;
}

.views {
  display: flex;
  align-items: center;
  height: 100%;
  margin-left: auto;
  padding-right: 20px;
}

.view {
  display: flex;
  align-items: center;
  justify-content: center;
  width: 40px;
  height: 100%;
}

.view.on {
  border: none;
  border-radius: 0;
  background: #e0e0e0;
}

.zoom-btn {
  margin: 0 5px;
}

.zoom {
  width: 100px;
  height: 16px;
  appearance: none;
  background: linear-gradient(#666, #666) no-repeat center / 100% 1px;
}

.zoom::-webkit-slider-thumb {
  appearance: none;
  width: 5px;
  height: 12px;
  background: #555;
}

.percent {
  margin-left: 8px;
  font-size: 13px;
}
```
